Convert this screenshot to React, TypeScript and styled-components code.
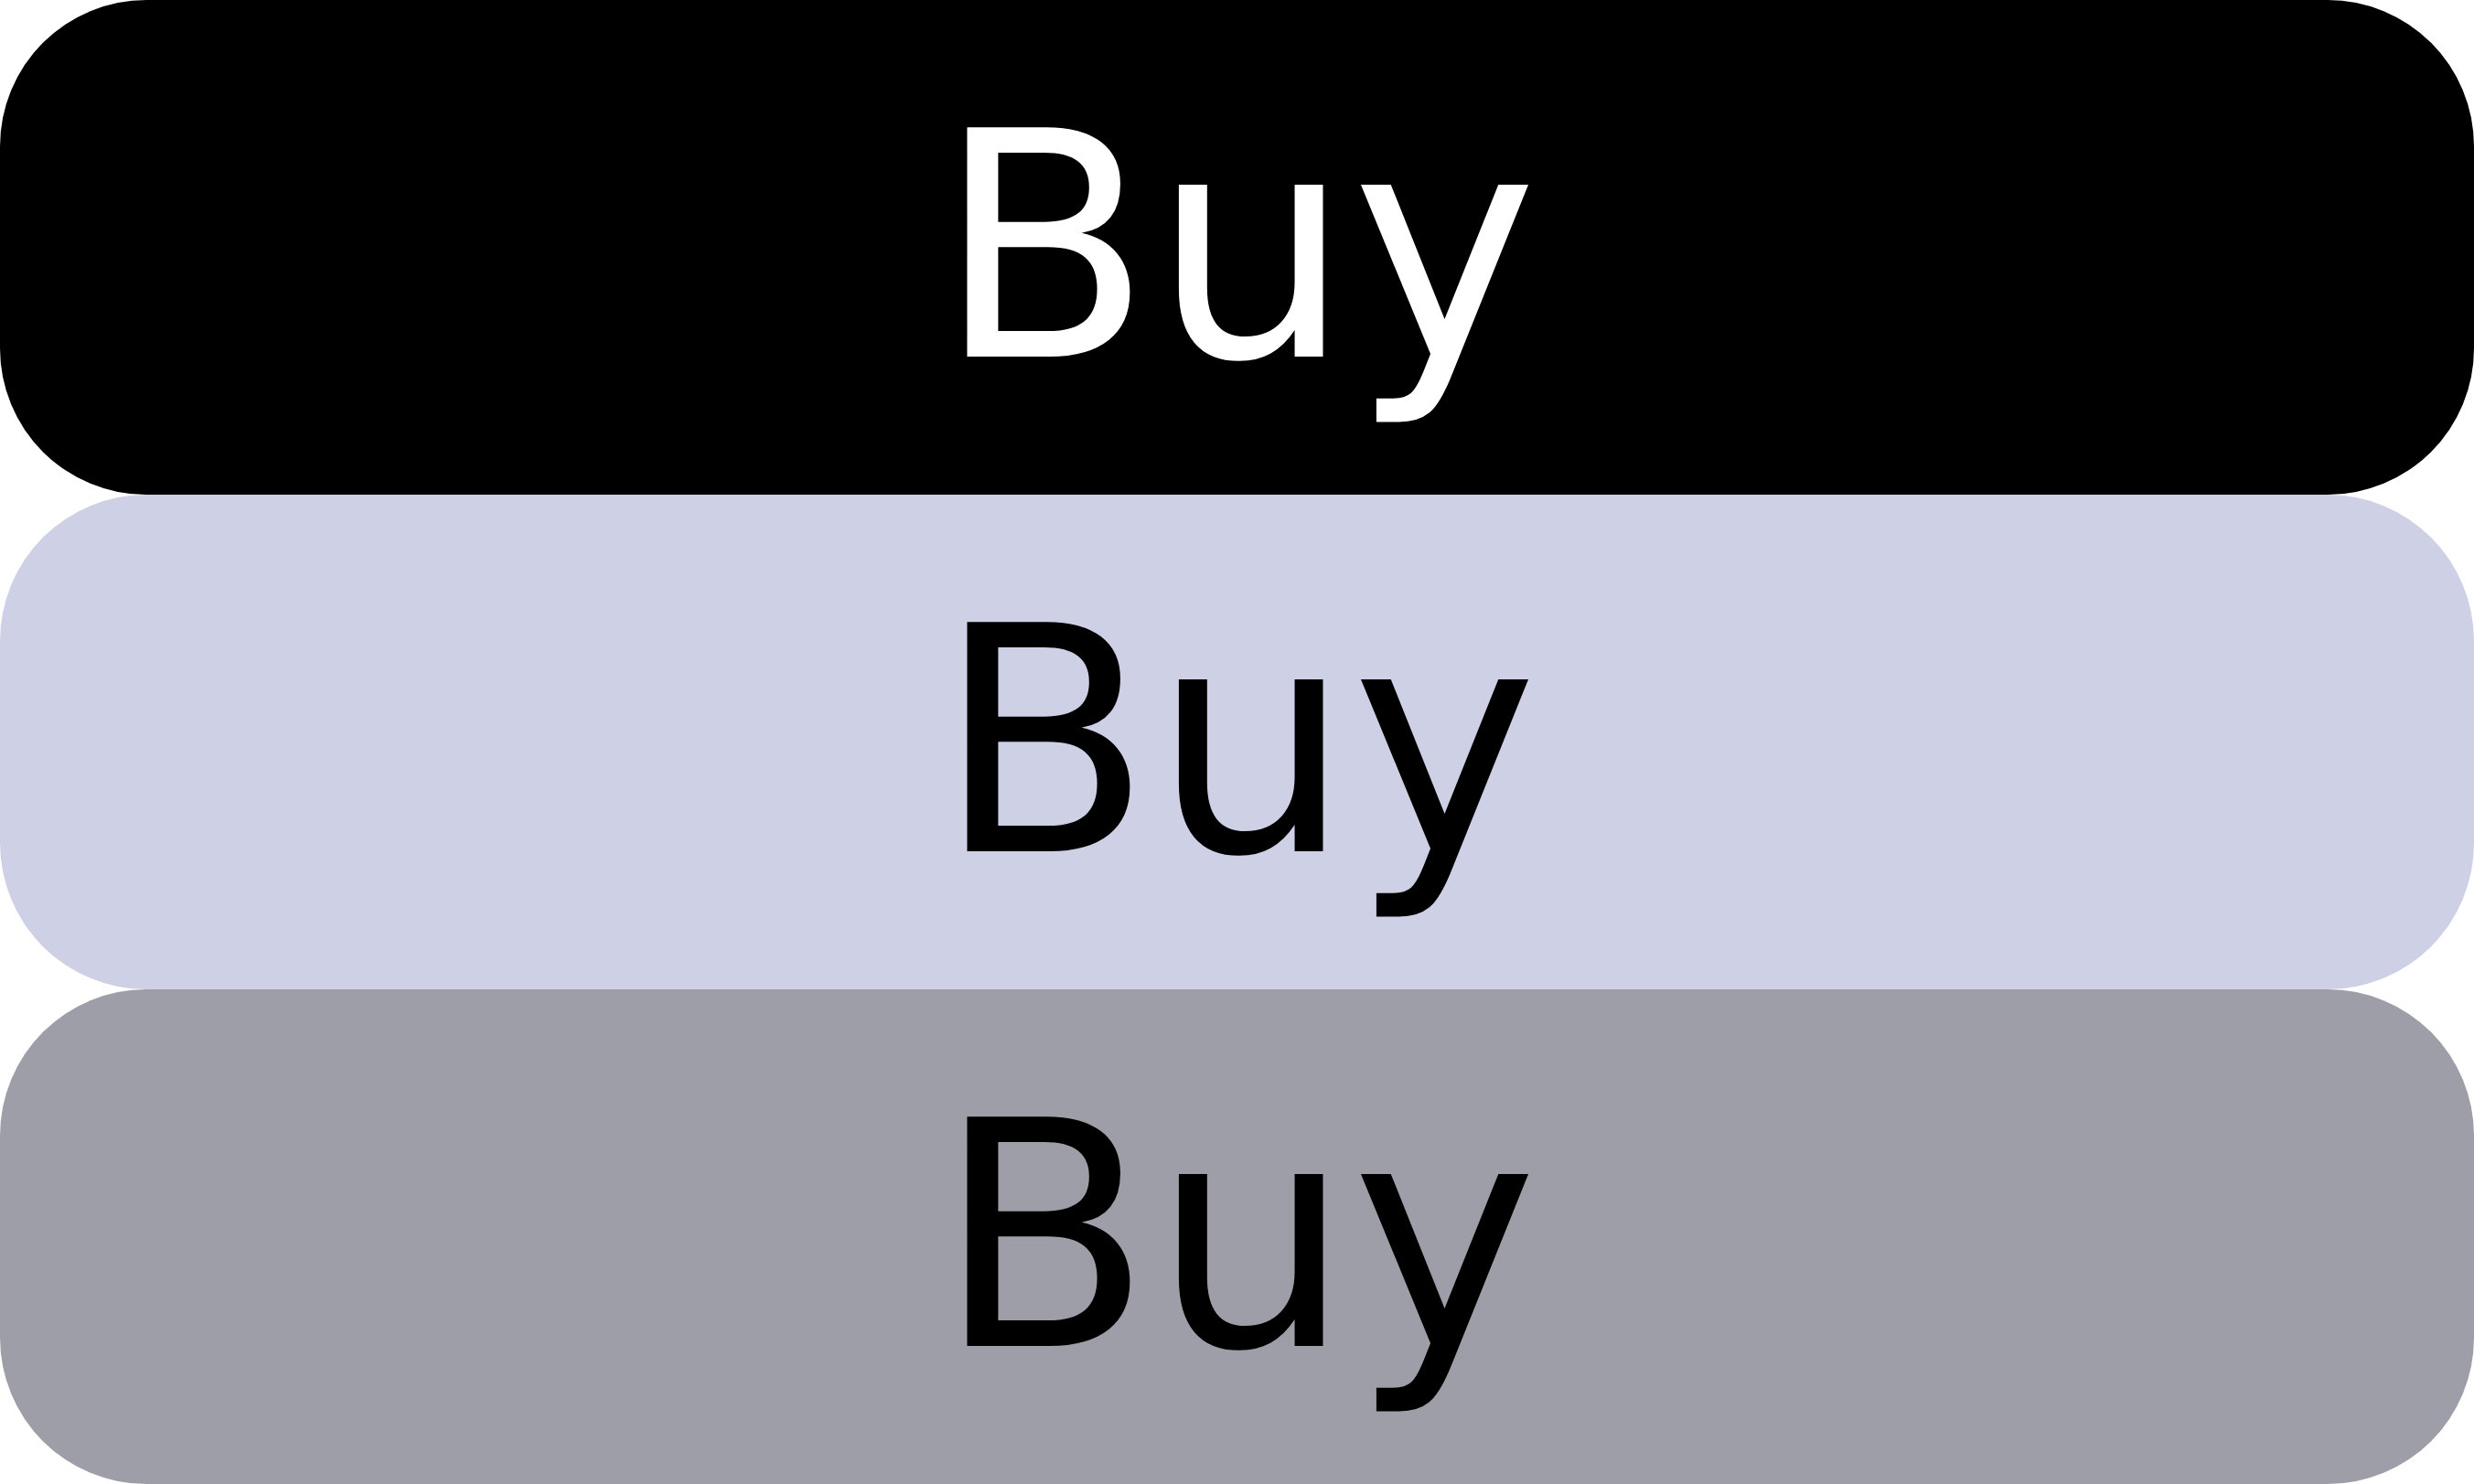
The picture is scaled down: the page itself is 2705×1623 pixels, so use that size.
import styled, { createGlobalStyle } from 'styled-components'

const GlobalStyle = createGlobalStyle`
  html, body {
    margin: 0;
    padding: 0;
    background: #ffffff;
  }
`

type Variant = 'primary' | 'secondary' | 'muted'

const palette: Record<Variant, { bg: string; fg: string }> = {
  primary: { bg: '#000000', fg: '#ffffff' },
  secondary: { bg: '#ced1e6', fg: '#000000' },
  muted: { bg: '#9e9ea8', fg: '#000000' },
}

const Stack = styled.div`
  display: flex;
  flex-direction: column;
  width: 100%;
`

const BuyButton = styled.button<{ $variant: Variant }>`
  display: flex;
  align-items: center;
  justify-content: center;
  width: 100%;
  height: 541px;
  margin: 0;
  padding: 0;
  border: none;
  border-radius: 160px;
  background: ${(p) => palette[p.$variant].bg};
  color: ${(p) => palette[p.$variant].fg};
  font-family: 'DejaVu Sans', sans-serif;
  font-size: 344px;
  line-height: normal;
  cursor: pointer;
`

export default function App() {
  const variants: Variant[] = ['primary', 'secondary', 'muted']
  return (
    <>
      <GlobalStyle />
      <Stack>
        {variants.map((v) => (
          <BuyButton key={v} $variant={v}>
            Buy
          </BuyButton>
        ))}
      </Stack>
    </>
  )
}
